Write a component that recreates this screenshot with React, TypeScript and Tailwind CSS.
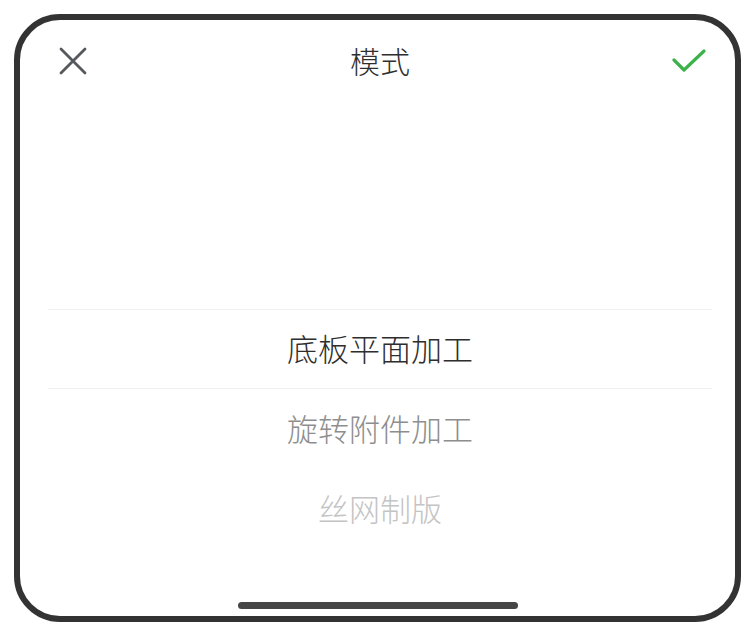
const OPTIONS = ["底板平面加工", "旋转附件加工", "丝网制版"];

// colour fades with distance from the selected row
const ROW_COLORS = ["text-[#2e2e2e]", "text-[#8e8e8e]", "text-[#c4c4c4]"];

export default function App() {
  return (
    <div
      className="w-[755px] h-[640px] bg-white pt-[14px] pb-[18px] px-[14px]"
      style={{ fontFamily: '"Noto Sans CJK SC", "Noto Sans", sans-serif' }}
    >
      <div className="h-full border-[6px] border-[#333333] rounded-[46px] bg-white flex flex-col overflow-hidden">
        {/* Header */}
        <div className="h-[82px] shrink-0 flex items-center justify-between pl-[38px] pr-[29px]">
          <button className="w-[30px] h-[30px] flex items-center justify-center">
            <svg width="28" height="28" viewBox="0 0 28 28" fill="none">
              <path
                d="M2 2 L26 26 M26 2 L2 26"
                stroke="#55585c"
                strokeWidth="2.8"
                strokeLinecap="round"
              />
            </svg>
          </button>
          <div className="text-[30px] leading-none font-light text-[#2f2f2f] -mt-[2px]">模式</div>
          <button className="w-[34px] h-[30px] flex items-center justify-center">
            <svg width="34" height="24" viewBox="0 0 34 24" fill="none">
              <path
                d="M2 11 L12 21 L32 2"
                stroke="#3db24b"
                strokeWidth="3.2"
                strokeLinecap="round"
                strokeLinejoin="round"
              />
            </svg>
          </button>
        </div>

        {/* Picker */}
        <div className="mt-[207px] ml-[28px] mr-[23px]">
          {OPTIONS.map((opt, i) => (
            <div
              key={opt}
              className={`h-[80px] flex items-center justify-center pb-[3px] text-[31px] leading-none font-light ${ROW_COLORS[i]} ${
                i === 0 ? "border-y border-[#f0f0f0]" : ""
              }`}
            >
              {opt}
            </div>
          ))}
        </div>

        {/* Home indicator */}
        <div className="mt-auto pb-[7px] flex justify-center">
          <div className="w-[280px] h-[7px] rounded-full bg-[#464646]" />
        </div>
      </div>
    </div>
  );
}
